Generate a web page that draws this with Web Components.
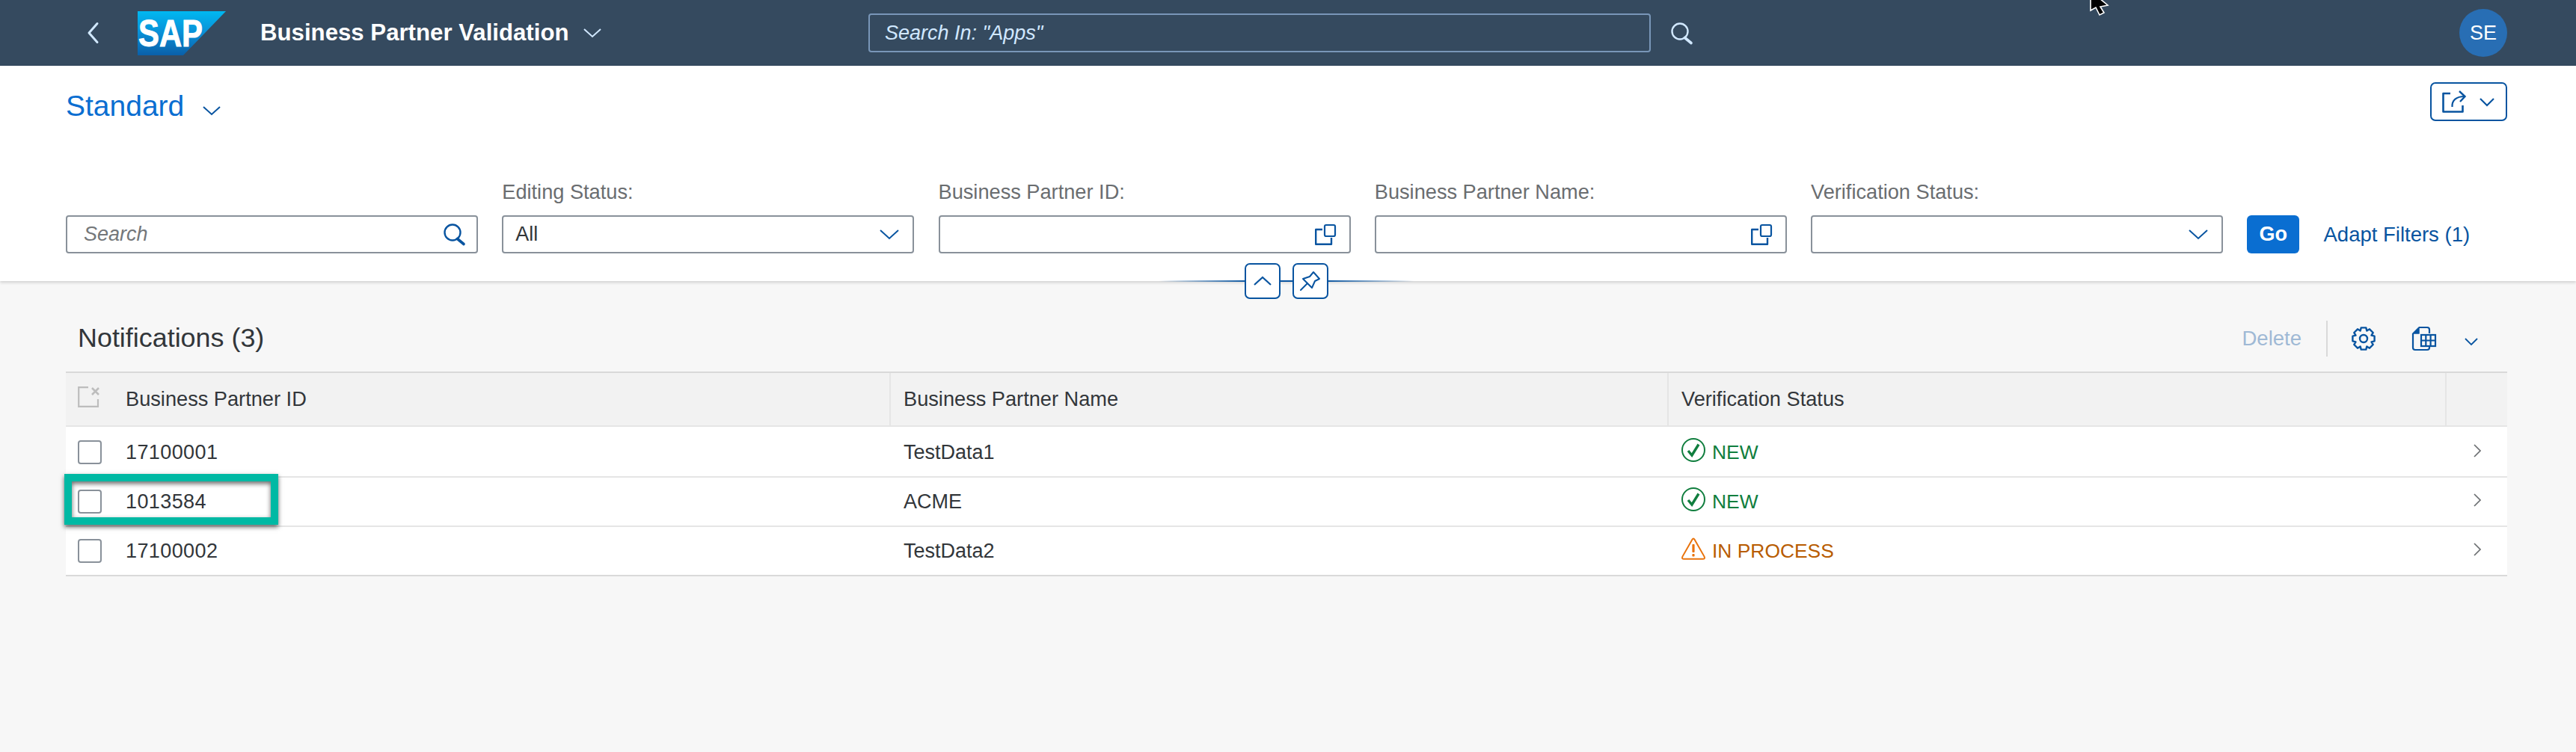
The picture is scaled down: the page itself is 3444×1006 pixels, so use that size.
<!DOCTYPE html>
<html lang="en">
<head>
<meta charset="utf-8">
<title>Business Partner Validation</title>
<style>
    html, body { margin: 0; height: 100%; }
    body {
        min-height: 1006px;
        overflow: hidden;
        background: #f7f7f7;
        color: #32363a;
        font-family: "Liberation Sans", Arial, sans-serif;
        font-size: 27px;
    }
</style>
</head>
<body>
<shell-bar title-text="Business Partner Validation" search-hint='Search In: "Apps"' initials="SE"></shell-bar>

<filter-bar variant="Standard">
    <filter-field type="search" hint="Search"></filter-field>
    <filter-field type="select" label="Editing Status:" value="All"></filter-field>
    <filter-field type="help" label="Business Partner ID:"></filter-field>
    <filter-field type="help" label="Business Partner Name:"></filter-field>
    <filter-field type="select" label="Verification Status:"></filter-field>
</filter-bar>

<data-table heading="Notifications (3)">
    <data-row>
        <span slot="id">17100001</span>
        <span slot="name">TestData1</span>
        <status-text slot="status" kind="success">NEW</status-text>
    </data-row>
    <data-row>
        <span slot="id">1013584</span>
        <span slot="name">ACME</span>
        <status-text slot="status" kind="success">NEW</status-text>
    </data-row>
    <data-row>
        <span slot="id">17100002</span>
        <span slot="name">TestData2</span>
        <status-text slot="status" kind="warning">IN PROCESS</status-text>
    </data-row>
</data-table>

<script>
    function gearPath() {
        const points = [];
        for (let i = 0; i < 8; i++) {
            const a = i * Math.PI / 4 - Math.PI / 2;
            const spots = [[-0.39, 11.4], [-0.22, 15], [0.22, 15], [0.39, 11.4]];
            spots.forEach(([da, r]) => {
                points.push((16 + r * Math.cos(a + da)).toFixed(1) + ' ' + (16 + r * Math.sin(a + da)).toFixed(1));
            });
        }
        return 'M' + points.join(' L') + ' Z';
    }

    function chevron(w, h, sw) {
        return {
            w, h,
            body: `<polyline points="1,1 ${w / 2},${h - 1} ${w - 1},1" fill="none" stroke="currentColor" stroke-width="${sw}"/>`
        };
    }

    const lens = `<circle cx="12" cy="12" r="10.5" fill="none" stroke="currentColor" stroke-width="2.4"/>
        <path d="M18.5 20.5 L27 27.5" stroke="currentColor" stroke-width="3.6" stroke-linecap="round"/>`;

    const ICONS = {
        back: { w: 16, h: 28, body: '<polyline points="14,1.5 3,14 14,26.5" fill="none" stroke="currentColor" stroke-width="3" stroke-linecap="round" stroke-linejoin="round"/>' },
        down: chevron(24, 12, 2),
        downSmall: chevron(20, 11, 2.2),
        downField: chevron(26, 13, 2),
        downTable: chevron(18, 10, 1.8),
        search: { w: 29, h: 29, body: lens },
        share: { w: 32, h: 30, body: `<path d="M11 4 H1.5 V28.5 H27.5 V20" fill="none" stroke="currentColor" stroke-width="2.6" stroke-linejoin="round"/>
            <path d="M13.5 22 C13 13 19 8 30 8" fill="none" stroke="currentColor" stroke-width="2.2"/>
            <polyline points="23,1 30.5,8 24,15" fill="none" stroke="currentColor" stroke-width="2.4"/>` },
        help: { w: 28, h: 28, body: `<rect x="13" y="1" width="14" height="15" rx="2" fill="none" stroke="currentColor" stroke-width="2.2"/>
            <path d="M10 7 H1.2 V26.8 H22 V18" fill="none" stroke="currentColor" stroke-width="2.4" stroke-linejoin="round"/>` },
        up: { w: 24, h: 12, body: '<polyline points="1,11 12,1 23,11" fill="none" stroke="currentColor" stroke-width="2.2"/>' },
        pin: { w: 28, h: 27, body: `<path d="M18 1 L26 10 L20 13 L16 22 L4 10 L13 7 Z" fill="none" stroke="currentColor" stroke-width="2" stroke-linejoin="round"/>
            <path d="M1 25 L10 16" stroke="currentColor" stroke-width="2" stroke-linecap="round"/>` },
        gear: { w: 32, h: 32, body: `<path d="${gearPath()}" fill="none" stroke="currentColor" stroke-width="2.4" stroke-linejoin="round"/>
            <circle cx="16" cy="16" r="5" fill="none" stroke="currentColor" stroke-width="2.4"/>` },
        sheet: { w: 32, h: 32, body: `<path d="M1 9 L9 1 V9 Z" fill="currentColor" stroke="currentColor" stroke-width="1.5" stroke-linejoin="round"/>
            <path d="M9 1 H20 Q23 1 23 4 V9 M1 9 V28 Q1 31 4 31 H20 Q23 31 23 28 V27" fill="none" stroke="currentColor" stroke-width="2.2"/>
            <rect x="12" y="11" width="19" height="15" fill="none" stroke="currentColor" stroke-width="2.2"/>
            <path d="M18.3 11 V26 M24.6 11 V26 M12 18.5 H31" stroke="currentColor" stroke-width="2.2"/>` },
        next: { w: 10, h: 18, body: '<polyline points="1,1 9,9 1,17" fill="none" stroke="currentColor" stroke-width="1.7"/>' },
        clear: { w: 30, h: 28, body: `<path d="M14 1.2 H1.2 V26.8 H27 V17" fill="none" stroke="currentColor" stroke-width="2.2"/>
            <path d="M19 2 L28 11 M28 2 L19 11" stroke="currentColor" stroke-width="2.6"/>` },
        success: { w: 32, h: 32, body: `<circle cx="16" cy="16" r="15" fill="none" stroke="currentColor" stroke-width="2"/>
            <polyline points="9,17 14,23 23,8.5" fill="none" stroke="currentColor" stroke-width="3.4"/>` },
        warning: { w: 32, h: 30, body: `<path d="M16 1.5 Q16.8 1.5 17.4 2.6 L30.6 25.6 Q32 28.8 28.6 28.8 H3.4 Q0 28.8 1.4 25.6 L14.6 2.6 Q15.2 1.5 16 1.5 Z" fill="none" stroke="currentColor" stroke-width="2"/>
            <rect x="14.4" y="9" width="3.2" height="11" rx="1" fill="currentColor"/>
            <rect x="14.4" y="22" width="3.2" height="3.4" rx="1" fill="currentColor"/>` }
    };

    class UiIcon extends HTMLElement {
        constructor() {
            super();
            this.attachShadow({ mode: 'open' });
        }

        connectedCallback() {
            const icon = ICONS[this.getAttribute('name')];
            this.shadowRoot.innerHTML = `
                <style>
                    :host { display: inline-flex; flex: none; }
                    svg { display: block; overflow: visible; }
                </style>
                <svg width="${icon.w}" height="${icon.h}" viewBox="0 0 ${icon.w} ${icon.h}">${icon.body}</svg>
            `;
        }
    }

    class ShellBar extends HTMLElement {
        constructor() {
            super();
            this.attachShadow({ mode: 'open' });
        }

        connectedCallback() {
            this.shadowRoot.innerHTML = `
                <style>
                    :host {
                        display: flex;
                        position: relative;
                        align-items: center;
                        height: 88px;
                        background: #354a5f;
                        color: #fff;
                    }
                    .back { margin-left: 116px; color: #d1e8ff; }
                    .logo { display: block; margin-left: 52px; flex: none; }
                    .logo text { font-family: "Liberation Sans", Arial, sans-serif; font-weight: 700; font-size: 50px; fill: #fff; stroke: #fff; stroke-width: 1; }
                    .title { width: 416px; margin-left: 46px; font-size: 31.2px; font-weight: 700; white-space: nowrap; flex: none; }
                    .title-arrow { margin-left: 16px; color: #d1e8ff; }
                    .search {
                        box-sizing: border-box;
                        width: 1046px;
                        height: 52px;
                        margin-left: 357px;
                        padding-left: 20px;
                        display: flex;
                        align-items: center;
                        border: 2px solid #7996b8;
                        border-radius: 4px;
                        font-size: 27px;
                        font-style: italic;
                        color: #d1e8ff;
                    }
                    .search-icon { margin-left: 27px; color: #d1e8ff; }
                    .avatar {
                        width: 64px;
                        height: 64px;
                        margin-left: auto;
                        margin-right: 92px;
                        display: flex;
                        align-items: center;
                        justify-content: center;
                        border-radius: 50%;
                        background: #286eb4;
                        font-size: 27px;
                    }
                    .cursor { position: absolute; left: 2794px; top: 0; display: block; }
                </style>
                <ui-icon class="back" name="back"></ui-icon>
                <svg class="logo" width="118" height="59" viewBox="0 0 118 59">
                    <defs>
                        <linearGradient id="sapFill" x1="0" y1="0" x2="0" y2="1">
                            <stop offset="0" stop-color="#00b8f1"/>
                            <stop offset="0.5" stop-color="#0a8fd6"/>
                            <stop offset="1" stop-color="#0a5fa8"/>
                        </linearGradient>
                    </defs>
                    <polygon points="0,0 118,0 61,59 0,59" fill="url(#sapFill)"/>
                    <text x="1" y="47" textLength="86" lengthAdjust="spacingAndGlyphs">SAP</text>
                </svg>
                <span class="title">${this.getAttribute('title-text')}</span>
                <ui-icon class="title-arrow" name="down"></ui-icon>
                <div class="search">${this.getAttribute('search-hint')}</div>
                <ui-icon class="search-icon" name="search"></ui-icon>
                <div class="avatar">${this.getAttribute('initials')}</div>
                <svg class="cursor" width="26" height="22" viewBox="0 0 26 22">
                    <polygon points="1,-12 24,7 14,9 19,17 13,20 8,10 1,14" fill="#000" stroke="#fff" stroke-width="1.6"/>
                </svg>
            `;
        }
    }

    class FilterField extends HTMLElement {
        constructor() {
            super();
            this.attachShadow({ mode: 'open' });
        }

        connectedCallback() {
            const type = this.getAttribute('type');
            const iconName = { search: 'search', select: 'downField', help: 'help' }[type];
            this.shadowRoot.innerHTML = `
                <style>
                    :host { display: block; flex: 0 0 551px; }
                    label { display: block; height: 30px; line-height: 30px; margin-bottom: 16px; color: #6a6d70; font-size: 27.2px; white-space: nowrap; }
                    .box {
                        box-sizing: border-box;
                        height: 51px;
                        display: flex;
                        align-items: center;
                        padding: 0 ${type === 'search' ? 15 : 18}px 0 16px;
                        background: #fff;
                        border: 2px solid #89919a;
                        border-radius: 4px;
                        color: #32363a;
                        font-size: 27px;
                    }
                    .hint { padding-left: 6px; font-style: italic; color: #74777a; }
                    ui-icon { margin-left: auto; color: #0854a0; }
                </style>
                ${this.getAttribute('label') ? `<label>${this.getAttribute('label')}</label>` : ''}
                <div class="box">
                    ${this.getAttribute('hint') ? `<span class="hint">${this.getAttribute('hint')}</span>` : ''}
                    <span>${this.getAttribute('value') || ''}</span>
                    <ui-icon name="${iconName}"></ui-icon>
                </div>
            `;
        }
    }

    class FilterBar extends HTMLElement {
        constructor() {
            super();
            this.attachShadow({ mode: 'open' });
        }

        connectedCallback() {
            this.shadowRoot.innerHTML = `
                <style>
                    :host {
                        display: block;
                        position: relative;
                        box-sizing: border-box;
                        height: 288px;
                        padding: 22px 92px 0 88px;
                        background: #fff;
                        box-shadow: 0 2px 4px rgba(0, 0, 0, 0.16);
                    }
                    .head { display: flex; justify-content: space-between; align-items: flex-start; height: 52px; margin-bottom: 80px; }
                    .variant { display: flex; align-items: center; padding-top: 10px; color: #0a6ed1; font-size: 39px; line-height: 44px; }
                    .variant ui-icon { margin: 11px 0 0 25px; color: #0854a0; }
                    .share {
                        box-sizing: border-box;
                        width: 103px;
                        height: 52px;
                        display: flex;
                        align-items: center;
                        padding-left: 14px;
                        gap: 18px;
                        border: 2px solid #0854a0;
                        border-radius: 7px;
                        color: #0854a0;
                    }
                    .filters { display: flex; align-items: flex-end; gap: 32.25px; }
                    .go {
                        width: 70px;
                        height: 51px;
                        display: flex;
                        align-items: center;
                        justify-content: center;
                        flex: none;
                        background: #0a6ed1;
                        border-radius: 6px;
                        color: #fff;
                        font-size: 27px;
                        font-weight: 700;
                    }
                    .adapt { height: 51px; line-height: 51px; color: #0854a0; font-size: 27.5px; white-space: nowrap; }
                    .collapse {
                        position: absolute;
                        left: 1550px;
                        top: 264px;
                        width: 340px;
                        height: 48px;
                        display: flex;
                        justify-content: center;
                        gap: 16px;
                        background: linear-gradient(90deg, transparent, #0854a0 35%, #0854a0 65%, transparent) center / 100% 2px no-repeat;
                        z-index: 1;
                    }
                    .collapse span {
                        box-sizing: border-box;
                        width: 48px;
                        height: 48px;
                        display: flex;
                        align-items: center;
                        justify-content: center;
                        background: #fff;
                        border: 2px solid #0854a0;
                        border-radius: 7px;
                        color: #0854a0;
                    }
                </style>
                <div class="head">
                    <div class="variant">${this.getAttribute('variant')}<ui-icon name="down"></ui-icon></div>
                    <div class="share"><ui-icon name="share"></ui-icon><ui-icon name="downSmall"></ui-icon></div>
                </div>
                <div class="filters">
                    <slot></slot>
                    <div class="go">Go</div>
                    <div class="adapt">Adapt Filters (1)</div>
                </div>
                <div class="collapse">
                    <span><ui-icon name="up"></ui-icon></span>
                    <span><ui-icon name="pin"></ui-icon></span>
                </div>
            `;
        }
    }

    class StatusText extends HTMLElement {
        constructor() {
            super();
            this.attachShadow({ mode: 'open' });
        }

        connectedCallback() {
            const kind = this.getAttribute('kind');
            this.shadowRoot.innerHTML = `
                <style>
                    :host { display: flex; align-items: center; gap: 9px; font-size: 26.4px; color: ${kind === 'warning' ? '#b85c00' : '#107e3e'}; }
                    ui-icon { color: ${kind === 'warning' ? '#e9730c' : '#107e3e'}; margin-top: -6px; }
                </style>
                <ui-icon name="${kind}"></ui-icon><slot></slot>
            `;
        }
    }

    const COLUMNS = '1103px 1040px 1040px 81px';

    class DataRow extends HTMLElement {
        constructor() {
            super();
            this.attachShadow({ mode: 'open' });
            this.shadowRoot.innerHTML = `
                <style>
                    :host {
                        display: grid;
                        grid-template-columns: ${COLUMNS};
                        align-items: center;
                        box-sizing: border-box;
                        height: 66px;
                        border-bottom: 2px solid #e5e5e5;
                        background: #fff;
                        color: #32363a;
                        font-size: 27px;
                    }
                    :host(:last-child) { border-bottom-color: #d9d9d9; }
                    .first { display: flex; align-items: center; padding-left: 16px; letter-spacing: 0.4px; }
                    .check { box-sizing: border-box; width: 32px; height: 32px; margin-right: 32px; background: #fff; border: 2px solid #89919a; border-radius: 4px; }
                    .cell { display: flex; align-items: center; padding-left: 17px; }
                    .nav { display: flex; padding-left: 36px; color: #6a6d70; margin-top: -4px; }
                </style>
                <div class="first"><span class="check"></span><slot name="id"></slot></div>
                <div class="cell"><slot name="name"></slot></div>
                <div class="cell"><slot name="status"></slot></div>
                <div class="nav"><ui-icon name="next"></ui-icon></div>
            `;
        }
    }

    class DataTable extends HTMLElement {
        constructor() {
            super();
            this.attachShadow({ mode: 'open' });
        }

        connectedCallback() {
            this.shadowRoot.innerHTML = `
                <style>
                    :host { display: block; padding: 0 92px 0 88px; }
                    .toolbar { display: flex; align-items: center; box-sizing: border-box; height: 121px; padding: 32px 39px 0 16px; }
                    h2 { margin: 0; font-size: 35.9px; font-weight: 400; color: #32363a; }
                    .tools { display: flex; align-items: center; margin-left: auto; color: #0854a0; }
                    .delete { color: #9fb9d5; font-size: 27.5px; }
                    .rule { width: 2px; height: 48px; margin: 0 32px 0 33px; background: #d9d9d9; }
                    .sheet { margin-left: 49px; }
                    .more { margin-left: 38px; margin-top: 8px; }
                    .grid { position: relative; }
                    .head {
                        display: grid;
                        grid-template-columns: ${COLUMNS};
                        box-sizing: border-box;
                        height: 74px;
                        background: #f2f2f2;
                        border-top: 2px solid #d9d9d9;
                        border-bottom: 2px solid #e5e5e5;
                        font-size: 27.2px;
                    }
                    .head div { display: flex; align-items: center; box-sizing: border-box; padding-left: 17px; border-right: 2px solid #e5e5e5; }
                    .head div:first-child { padding-left: 16px; }
                    .head div:last-child { border-right: 0; }
                    .clear { margin-right: 34px; margin-top: -7px; color: #bdbdbd; }
                    .rows { padding-top: 2px; background: #fff; }
                    .mark {
                        position: absolute;
                        left: -2px;
                        top: 137px;
                        box-sizing: border-box;
                        width: 286px;
                        height: 68px;
                        border: 10px solid #00b9a4;
                        box-shadow: 0 3px 6px rgba(0, 0, 0, 0.6), inset 0 3px 6px rgba(0, 0, 0, 0.6);
                    }
                </style>
                <div class="toolbar">
                    <h2>${this.getAttribute('heading')}</h2>
                    <div class="tools">
                        <span class="delete">Delete</span>
                        <span class="rule"></span>
                        <ui-icon name="gear"></ui-icon>
                        <ui-icon class="sheet" name="sheet"></ui-icon>
                        <ui-icon class="more" name="downTable"></ui-icon>
                    </div>
                </div>
                <div class="grid">
                    <div class="head">
                        <div><ui-icon class="clear" name="clear"></ui-icon>Business Partner ID</div>
                        <div>Business Partner Name</div>
                        <div>Verification Status</div>
                        <div></div>
                    </div>
                    <div class="rows"><slot></slot></div>
                    <div class="mark"></div>
                </div>
            `;
        }
    }

    customElements.define('ui-icon', UiIcon);
    customElements.define('shell-bar', ShellBar);
    customElements.define('filter-field', FilterField);
    customElements.define('filter-bar', FilterBar);
    customElements.define('status-text', StatusText);
    customElements.define('data-row', DataRow);
    customElements.define('data-table', DataTable);
</script>
</body>
</html>
